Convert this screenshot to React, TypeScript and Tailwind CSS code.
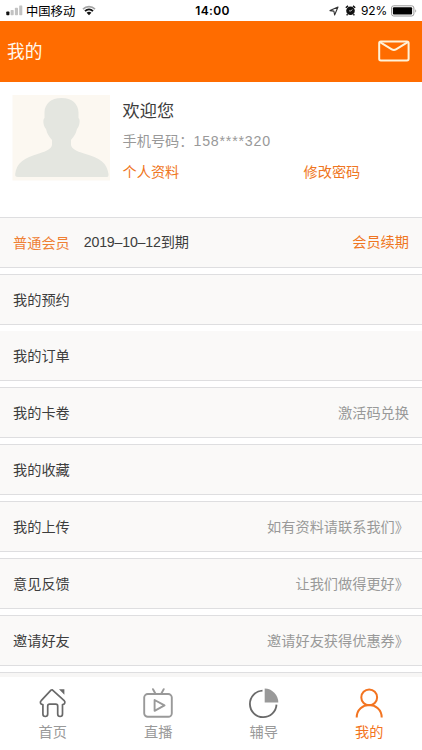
import React from "react";

type Row = { label: string; hint?: string; flat?: boolean };

const rows: Row[] = [
  { label: "我的预约" },
  { label: "我的订单", flat: true },
  { label: "我的卡卷", hint: "激活码兑换" },
  { label: "我的收藏" },
  { label: "我的上传", hint: "如有资料请联系我们》" },
  { label: "意见反馈", hint: "让我们做得更好》" },
  { label: "邀请好友", hint: "邀请好友获得优惠券》" },
];

function StatusBar() {
  return (
    <div className="flex h-[21px] shrink-0 items-center bg-white pl-[6px] pr-[5px] text-black">
      <div className="flex flex-1 items-center">
        <svg width="17" height="11" viewBox="0 0 17 11">
          <rect x="0.3" y="6.6" width="3.1" height="3.6" rx="0.7" fill="#111" />
          <rect x="4.6" y="5" width="3.1" height="5.2" rx="0.7" fill="#c2c2c2" />
          <rect x="8.9" y="2.8" width="3.1" height="7.4" rx="0.7" fill="#c2c2c2" />
          <rect x="13.2" y="0.4" width="3.1" height="9.8" rx="0.7" fill="#c2c2c2" />
        </svg>
        <span className="ml-[3px] text-[12.3px] leading-[20px]">中国移动</span>
        <svg className="ml-[7px]" width="14" height="11" viewBox="0 0 14 11" fill="none">
          <path d="M1 4.1C4.4.7 9.6.7 13 4.1" stroke="#a3a3a3" strokeWidth="1.7" />
          <path d="M3 6.2C5.3 3.9 8.7 3.9 11 6.2" stroke="#111" strokeWidth="1.8" />
          <path d="M4.6 7.8C6 6.5 8 6.5 9.4 7.8L7 10.3Z" fill="#111" />
        </svg>
      </div>
      <span className="ml-[2px] font-['Inter'] text-[12px] font-semibold leading-[20px] tracking-[0.35px]">14:00</span>
      <div className="flex flex-1 items-center justify-end">
        <svg width="10" height="10" viewBox="0 0 10 10" fill="none">
          <path d="M9 1 5.6 9 4.9 5.1 1 4.6Z" stroke="#333" strokeWidth="1.1" strokeLinejoin="round" />
        </svg>
        <svg className="ml-[6px]" width="11" height="11" viewBox="0 0 11 11" fill="none">
          <circle cx="5.5" cy="5.8" r="4.3" fill="#111" />
          <path d="M.8 2.8 3 .9M10.2 2.8 8 .9M2.5 9.2l-.8 1.1M8.5 9.2l.8 1.1" stroke="#111" strokeWidth="1.4" />
          <path d="M5.7 6.1 7.2 4.5M5.7 6.1 4.2 5.8" stroke="#fff" strokeWidth=".8" />
        </svg>
        <span className="ml-[5px] font-['Inter'] text-[12px] leading-[20px] tracking-[-0.2px]">92%</span>
        <svg className="ml-[4px]" width="26" height="12" viewBox="0 0 26 12" fill="none">
          <rect x=".5" y=".8" width="22.4" height="10.2" rx="2.2" stroke="#999" />
          <rect x="1.9" y="2.2" width="19.2" height="7.4" rx="1" fill="#000" />
          <path d="M24.3 4.2v3.3c1.2-.5 1.2-2.8 0-3.3Z" fill="#999" />
        </svg>
      </div>
    </div>
  );
}

function Avatar() {
  return (
    <svg className="shrink-0" width="98" height="86" viewBox="0 0 98 86">
      <rect x=".5" width="97.5" height="85.500" fill="#fcf8f1" />
      <path
        d="M49.500 3C60 3 66.500 9 66.500 17.500V23C68.500 24 67.800 31 65 34C63.500 40 61 42.500 59 45V50C60 54 64 56 72 58.500C88 63 95 68 96.500 79C96.700 81.500 96 82 94 82H6C3.500 82 3 81 3.200 79C4.500 68 12 63 27 58.500C35 56 39 54 40 50V45C38 42.500 35.500 40 34 34C31.200 31 30.500 24 32.500 23V17.500C32.500 9 39 3 49.500 3Z"
        fill="#e4e6e0"
      />
    </svg>
  );
}

function HomeIcon() {
  return (
    <svg width="30" height="31" viewBox="0 0 30 31" fill="none">
      <path
        d="M14.300 1.800 26.200 12.600c1.500 1.500.5 3.900-1.700 3.900V26c0 3.300-4.800 3.300-4.800 0v-8c0-1.300-.7-1.900-1.900-1.900h-6.200c-1.200 0-1.900.6-1.900 1.900v8c0 3.300-4.800 3.300-4.800 0v-9.500c-2.500 0-3.300-2.400-1.700-3.900L13 2.200c.5-.5 1-.5 1.300-.4Z"
        stroke="#696969"
        strokeWidth="1.700"
        strokeLinejoin="round"
      />
      <path d="M21 1.200h5.400v5.600Z" fill="#696969" />
    </svg>
  );
}

function LiveIcon() {
  return (
    <svg width="30" height="31" viewBox="0 0 30 31" fill="none" stroke="#999" strokeWidth="1.900" strokeLinecap="round" strokeLinejoin="round">
      <rect x="1.200" y="6" width="27.600" height="22.800" rx="3.600" />
      <path d="m10 1.200 2.200 4M20.700 1.200l-2.200 4M11.600 12v10.800l9.900-5.400Z" />
    </svg>
  );
}

function TutorIcon() {
  return (
    <svg width="30" height="31" viewBox="0 0 30 31" fill="none">
      <path d="M13.500 2.600a13.300 13.300 0 1 0 14 14" stroke="#696969" strokeWidth="1.800" />
      <path d="M15.700.6A14 14 0 0 1 29.300 14.400H15.700Z" fill="#999" />
    </svg>
  );
}

function MineIcon() {
  return (
    <svg width="30" height="31" viewBox="0 0 30 31" fill="none" stroke="#f37420" strokeWidth="2">
      <circle cx="15.200" cy="9.400" r="7.900" />
      <path d="M2.700 29.600C2.700 12.900 27.700 12.900 27.700 29.600" />
    </svg>
  );
}

const tabs = [
  { label: "首页", icon: <HomeIcon /> },
  { label: "直播", icon: <LiveIcon /> },
  { label: "辅导", icon: <TutorIcon /> },
  { label: "我的", icon: <MineIcon />, active: true },
];

export default function App() {
  return (
    <div className="flex h-[750px] w-[422px] flex-col overflow-hidden bg-white font-['Noto_Sans_CJK_SC',sans-serif] text-[14.2px] leading-[20px] text-[#3d3d3d]">
      <StatusBar />
      <header className="flex h-[61px] shrink-0 items-center justify-between bg-[#ff6c00] pl-[7px] pr-[12px]">
        <h1 className="mb-[3px] text-[17.7px] leading-[24px] text-[#fff8ed]">我的</h1>
        <svg className="mb-px" width="32" height="22" viewBox="0 0 32 22" fill="none" stroke="#fff2d8" strokeWidth="2">
          <rect x="1.200" y="1.400" width="29.400" height="19" rx="1.600" />
          <path d="M2 2.200 13.800 9.300c1.500.9 2.700.9 4.200 0L29.800 2.200" />
        </svg>
      </header>

      <section className="flex h-[135px] shrink-0 pl-[12px] pt-[13px]">
        <Avatar />
        <div className="ml-[12.500px] flex-1">
          <h2 className="mt-[3px] text-[17.200px] leading-[24px]">欢迎您</h2>
          <p className="mt-[8px] flex text-[#999]">
            手机号码：
            <span className="pt-px font-['Liberation_Sans'] tracking-[0.800px]">158****320</span>
          </p>
          <div className="mt-[10px] flex text-[#ef7622]">
            <a className="w-[181px]">个人资料</a>
            <a>修改密码</a>
          </div>
        </div>
      </section>

      <main className="flex min-h-0 flex-1 flex-col gap-[6px] overflow-hidden">
        <div className="flex h-[51px] shrink-0 items-center border-y border-[#dedee0] bg-[#faf9f8] px-[13px] pb-[2px]">
          <span className="text-[#ef8034]">普通会员</span>
          <span className="ml-[14px] flex-1">
            <span className="font-['Liberation_Sans'] tracking-[-0.200px]">2019–10–12</span>到期
          </span>
          <span className="mb-[2px] text-[#ef7622]">会员续期</span>
        </div>
        {rows.map((row) => (
          <div
            key={row.label}
            className={`flex shrink-0 items-center justify-between border-b border-[#dedee0] bg-[#faf9f8] px-[13px] pb-[2px] ${
              row.flat ? "h-[50px]" : "h-[51px] border-t"
            }`}
          >
            <span>{row.label}</span>
            {row.hint && <span className="text-[#999]">{row.hint}</span>}
          </div>
        ))}
        <div className="h-[51px] shrink-0 border-t border-[#dedee0] bg-[#f7f6f5]" />
      </main>

      <nav className="grid h-[73px] shrink-0 grid-cols-4 bg-white pt-[11px]">
        {tabs.map((tab) => (
          <div key={tab.label} className={`flex flex-col items-center ${tab.active ? "text-[#f37420]" : "text-[#999]"}`}>
            {tab.icon}
            <span className="mt-[2px]">{tab.label}</span>
          </div>
        ))}
      </nav>
    </div>
  );
}
